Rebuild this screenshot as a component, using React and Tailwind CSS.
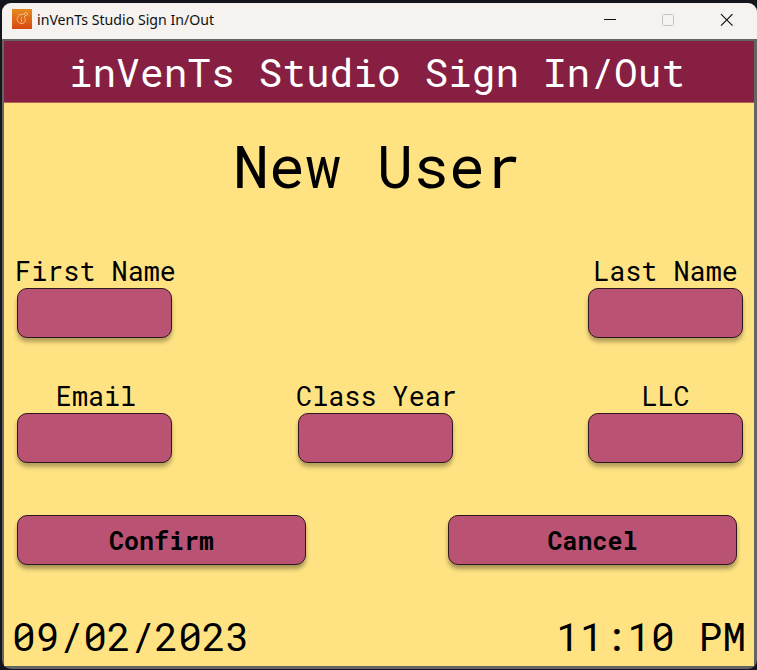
const mono = "font-['Roboto_Mono','DejaVu_Sans_Mono',monospace]";
const fieldBox =
  'h-[50px] w-[155px] rounded-[10px] border-[1.5px] border-[#2c1820] bg-[#ba5274] shadow-[0_4px_4px_rgba(0,0,0,0.3)] outline-none';

function AppIcon() {
  return (
    <svg width="20" height="20" viewBox="0 0 20 20" className="ml-[10px] shrink-0">
      <defs>
        <linearGradient id="flame" x1="0" y1="0" x2="0" y2="1">
          <stop offset="0" stopColor="#e48a20" />
          <stop offset="1" stopColor="#d9480f" />
        </linearGradient>
      </defs>
      <rect width="20" height="20" fill="url(#flame)" />
      <g fill="none" stroke="#ffe9c8" strokeWidth="0.9" strokeDasharray="1.4 0.5">
        <path d="M6.5 7.2A4.3 4.3 0 1 0 13 12.8Q13.6 9.5 12 8L13.5 6.5" />
        <path d="M6.5 6.2L8.5 5.5H10.5L12 4.5" />
        <circle cx="14" cy="5" r="1.5" />
        <path d="M9.5 8.5V9.5M9.5 10.5V13" />
      </g>
    </svg>
  );
}

function TitleBar() {
  return (
    <div className="flex h-9 items-center bg-[#f5f2f0] pb-[4px]">
      <AppIcon />
      <span className="ml-[5px] whitespace-nowrap font-['Noto_Sans',sans-serif] text-[14.5px] leading-5 text-[#111] [transform-origin:left] scale-x-[0.975]">
        inVenTs Studio Sign In/Out
      </span>
      <svg className="ml-auto mr-[24px] mt-px shrink-0" width="130" height="14" viewBox="0 0 130 14" fill="none">
        <path d="M1 6.5H13" stroke="#111" />
        <rect x="59.5" y="1.5" width="11" height="11" rx="1" stroke="#c6c3c2" />
        <path d="M118 1.2L129.5 12.7M129.5 1.2L118 12.7" stroke="#111" strokeWidth="1.2" />
      </svg>
    </div>
  );
}

function Field({ label, inset = '' }) {
  return (
    <label className="flex w-[155px] flex-col items-center">
      <span className={`mb-[2px] whitespace-pre text-[26.8px] leading-[30px] ${inset}`}>{label}</span>
      <input aria-label={label} className={fieldBox} />
    </label>
  );
}

function ActionButton({ children }) {
  return (
    <button className="h-[50px] w-[289px] rounded-[10px] border-[1.5px] border-[#2c1820] bg-[#ba5274] pt-[2px] text-[25px] font-bold leading-8 shadow-[0_4px_4px_rgba(0,0,0,0.35)]">
      {children}
    </button>
  );
}

export default function App() {
  return (
    <div className="h-[670px] w-[757px] overflow-hidden bg-[#15151d] pl-[2px] pt-[3px]">
      <div className="h-[666px] w-[755px] overflow-hidden rounded-[9px] bg-[#646464]">
        <TitleBar />
        <div className={`ml-[2px] mt-[2px] flex h-[625px] w-[750px] flex-col bg-[#ffe382] text-black ${mono}`}>
          <header className="h-[62px] border-b border-[#b5654f] bg-[#861f41] pr-[4px] text-center text-[39.5px] leading-[62px] text-white">
            inVenTs Studio Sign In/Out
          </header>
          <h1 className="mt-[20px] pr-[4px] text-center text-[60px] leading-[84px]">New User</h1>
          <div className="mt-[49px] flex justify-between pl-[13px] pr-[11px]">
            <Field label="First Name" inset="pl-[2px]" />
            <Field label="Last Name" />
          </div>
          <div className="mt-[43px] flex pl-[13px]">
            <Field label="Email" inset="pl-[3px]" />
            <div className="ml-[126px]">
              <Field label="Class Year" inset="pl-[2px]" />
            </div>
            <div className="ml-[135px]">
              <Field label="LLC" />
            </div>
          </div>
          <div className="mt-[52px] flex justify-between pl-[13px] pr-[17px]">
            <ActionButton>Confirm</ActionButton>
            <ActionButton>Cancel</ActionButton>
          </div>
          <footer className="mt-[44px] flex justify-between pl-[8px] pr-[8px] text-[39.6px] leading-[54px]">
            <span>09/02/2023</span>
            <span>11:10 PM</span>
          </footer>
        </div>
      </div>
    </div>
  );
}
